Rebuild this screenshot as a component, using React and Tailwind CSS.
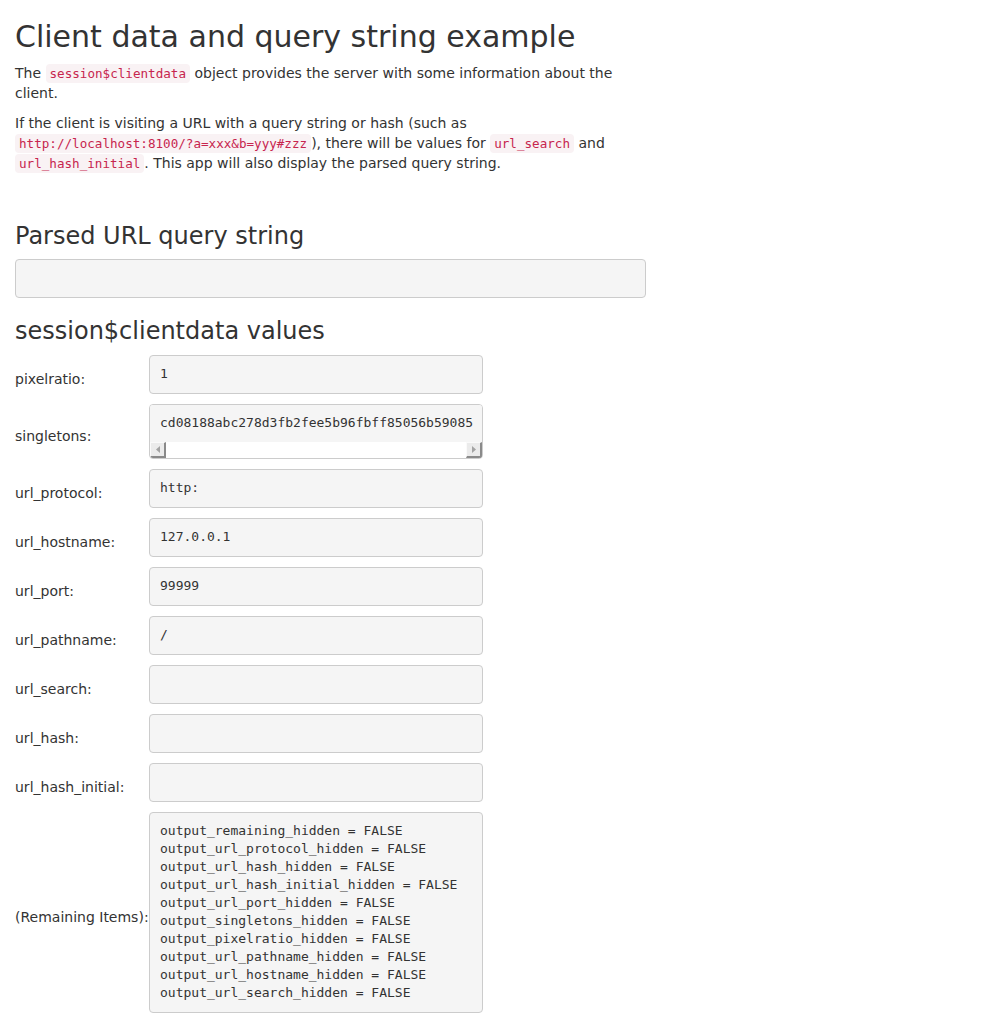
import React from "react"

const sans = "font-['DejaVu_Sans',sans-serif]"
const mono = "font-['DejaVu_Sans_Mono',monospace]"

function Code({ children }) {
    return (
        <code className={`${mono} text-[12.6px] leading-none px-[4px] py-[2px] rounded-[4px] bg-[#f9f2f4] text-[#c7254e]`}>
            {children}
        </code>
    )
}

function Pre({ children }) {
    return (
        <pre className={`${mono} block text-[13px] leading-[18px] text-[#333] bg-[#f5f5f5] border border-[#ccc] rounded-[4px] px-[10px] py-[9.5px] mb-[10px] min-h-[39px] whitespace-pre`}>
            {children}
        </pre>
    )
}

function ScrollPre({ children }) {
    return (
        <div className="mb-[10px] border border-[#ccc] rounded-[4px] overflow-hidden bg-white">
            <pre className={`${mono} text-[13px] leading-[18px] text-[#333] bg-[#f5f5f5] px-[10px] pt-[9.5px] pb-[9.5px] overflow-hidden whitespace-pre`}>
                {children}
            </pre>
            <div className="flex justify-between items-stretch h-[16px] bg-white">
                <div className="w-[16px] h-[16px] bg-[#ebebeb] border-t border-l border-t-[#fafafa] border-l-[#fafafa] border-b-2 border-r-2 border-b-[#8a8a8a] border-r-[#8a8a8a] flex items-center justify-center">
                    <svg width="4" height="7" viewBox="0 0 4 7"><path d="M4 0L0 3.5L4 7Z" fill="#a3a3a3" /></svg>
                </div>
                <div className="w-[16px] h-[16px] bg-[#ebebeb] border-t border-l border-t-[#fafafa] border-l-[#fafafa] border-b-2 border-r-2 border-b-[#8a8a8a] border-r-[#8a8a8a] flex items-center justify-center">
                    <svg width="4" height="7" viewBox="0 0 4 7"><path d="M0 0L4 3.5L0 7Z" fill="#a3a3a3" /></svg>
                </div>
            </div>
        </div>
    )
}

const rows = [
    ["pixelratio:", "1"],
    ["singletons:", "cd08188abc278d3fb2fee5b96fbff85056b59085", true],
    ["url_protocol:", "http:"],
    ["url_hostname:", "127.0.0.1"],
    ["url_port:", "99999"],
    ["url_pathname:", "/"],
    ["url_search:", ""],
    ["url_hash:", ""],
    ["url_hash_initial:", ""],
]

const remaining = [
    "output_remaining_hidden = FALSE",
    "output_url_protocol_hidden = FALSE",
    "output_url_hash_hidden = FALSE",
    "output_url_hash_initial_hidden = FALSE",
    "output_url_port_hidden = FALSE",
    "output_singletons_hidden = FALSE",
    "output_pixelratio_hidden = FALSE",
    "output_url_pathname_hidden = FALSE",
    "output_url_hostname_hidden = FALSE",
    "output_url_search_hidden = FALSE",
]

export default function App() {
    return (
        <div className={`${sans} text-[14px] leading-[20px] text-[#333] bg-white min-h-[1022px] px-[15px] pb-[10px]`}>
            <h2 className="text-[30px] leading-[33px] font-normal mt-[20px] mb-[10px]">Client data and query string example</h2>
            <div className="w-[631px]">
                <p className="mb-[10px]">
                    The <Code>session$clientdata</Code> object provides the server with some information about the client.
                </p>
                <p className="mb-[10px]">
                    If the client is visiting a URL with a query string or hash (such as <Code>http://localhost:8100/?a=xxx&amp;b=yyy#zzz</Code>), there will be values for <Code>url_search</Code> and <Code>url_hash_initial</Code>. This app will also display the parsed query string.
                </p>
                <h3 className="text-[24px] leading-[26.4px] font-normal mt-[50px] mb-[10px]">Parsed URL query string</h3>
                <Pre></Pre>
                <h3 className="text-[24px] leading-[26.4px] font-normal mt-[20px] mb-[10px]">session$clientdata values</h3>
            </div>
            <div className="grid grid-cols-[134px_334px] items-center">
                {rows.map(([label, value, scroll]) => (
                    <React.Fragment key={label}>
                        <div>{label}</div>
                        <div>{scroll ? <ScrollPre>{value}</ScrollPre> : <Pre>{value}</Pre>}</div>
                    </React.Fragment>
                ))}
                <div>(Remaining Items):</div>
                <div><Pre>{remaining.join("\n")}</Pre></div>
            </div>
        </div>
    )
}
